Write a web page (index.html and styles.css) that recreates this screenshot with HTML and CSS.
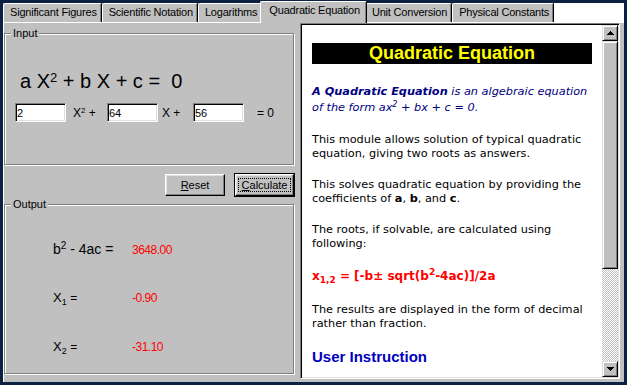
FILE: index.html
```html
<!DOCTYPE html>
<html>
<head>
  <meta charset="utf-8">
  <title>Quadratic Equation</title>
  <link rel="stylesheet" href="styles.css">
</head>
<body>
  <div class="window">
    <div class="tabs">
      <div class="tab">Significant Figures</div>
      <div class="tab">Scientific Notation</div>
      <div class="tab">Logarithms</div>
      <div class="tab active">Quadratic Equation</div>
      <div class="tab">Unit Conversion</div>
      <div class="tab">Physical Constants</div>
      <div class="tabs-fill"></div>
    </div>
    <div class="page">
      <div class="left">
        <div class="group input-group">
          <div class="group-title">Input</div>
          <div class="equation">a X<sup>2</sup> + b X + c = &nbsp;0</div>
          <div class="coeffs">
            <input class="field" type="text" value="2">
            <span class="term term-x2">X<sup>2</sup> +</span>
            <input class="field" type="text" value="64">
            <span class="term term-x">X +</span>
            <input class="field" type="text" value="56">
            <span class="term term-eq">= 0</span>
          </div>
        </div>
        <div class="actions">
          <button class="btn"><u>R</u>eset</button>
          <button class="btn default"><span class="focus"><u>C</u>alculate</span></button>
        </div>
        <div class="group output-group">
          <div class="group-title">Output</div>
          <div class="results">
            <div class="result">
              <span class="label">b<sup>2</sup> - 4ac =</span>
              <span class="value">3648.00</span>
            </div>
            <div class="result">
              <span class="label root">X<sub>1</sub> <span class="eq">=</span></span>
              <span class="value">-0.90</span>
            </div>
            <div class="result">
              <span class="label root">X<sub>2</sub> <span class="eq">=</span></span>
              <span class="value">-31.10</span>
            </div>
          </div>
        </div>
      </div>
      <div class="browser">
        <div class="doc">
          <div class="doc-title">Quadratic Equation</div>
          <p class="intro"><b>A Quadratic Equation</b> is an algebraic equation of the form ax<sup>2</sup> + bx + c = 0.</p>
          <p>This module allows solution of typical quadratic equation, giving two roots as answers.</p>
          <p>This solves quadratic equation by providing the coefficients of <b>a</b>, <b>b</b>, and <b>c</b>.</p>
          <p>The roots, if solvable, are calculated using following:</p>
          <p class="formula">x<sub>1,2</sub> = [-b± sqrt(b<sup>2</sup>-4ac)]/2a</p>
          <p>The results are displayed in the form of decimal rather than fraction.</p>
          <h2 class="doc-heading">User Instruction</h2>
        </div>
        <div class="scrollbar">
          <div class="sb-btn">
            <svg width="7" height="4" viewBox="0 0 7 4" shape-rendering="crispEdges"><polygon points="3.5,0 7,4 0,4" fill="#000"/></svg>
          </div>
          <div class="sb-thumb"></div>
          <div class="sb-track"></div>
          <div class="sb-btn">
            <svg width="7" height="4" viewBox="0 0 7 4" shape-rendering="crispEdges"><polygon points="0,0 7,0 3.5,4" fill="#000"/></svg>
          </div>
        </div>
      </div>
    </div>
  </div>
</body>
</html>
```
FILE: styles.css
```css
body {
  margin: 0;
  background-color: #0b2142;
  font-family: "Liberation Sans", Arial, sans-serif;
  font-size: 11px;
  color: #000;
}

sup,
sub {
  line-height: 0;
}

.window {
  margin: 1px 3px 3px;
  width: 621px;
  height: 381px;
  display: flex;
  flex-direction: column;
}

/* tab strip */
.tabs {
  display: flex;
  align-items: flex-end;
  height: 21px;
  flex: none;
}

.tab {
  box-sizing: border-box;
  height: 19px;
  padding: 0 4px 0 6px;
  line-height: 17px;
  letter-spacing: -0.2px;
  white-space: nowrap;
  background-color: #c0c0c0;
  border: 1px solid #fff;
  border-bottom: 0;
  border-right-color: #000;
  border-radius: 2px 2px 0 0;
  box-shadow: inset -1px 0 #808080;
}

.tab.active {
  position: relative;
  z-index: 1;
  height: 22px;
  margin: 0 -2px -1px;
  padding: 0 6px 0 8px;
}

.tabs-fill {
  flex: 1;
  height: 19px;
  background-color: #fff;
}

.page {
  flex: 1;
  display: flex;
  align-items: flex-start;
  gap: 6px;
  padding-right: 4px;
  background-color: #c0c0c0;
  border-top: 1px solid #fff;
  border-left: 1px solid #fff;
}

/* left side */
.left {
  width: 290px;
  flex: none;
  display: flex;
  flex-direction: column;
}

.group {
  box-sizing: border-box;
  display: flex;
  flex-direction: column;
  align-items: flex-start;
  border: 1px solid #808080;
  box-shadow: 1px 1px #fff, inset 1px 1px #fff;
}

.group-title {
  margin: -7px 0 0 6px;
  padding: 0 2px;
  line-height: 13px;
  background-color: #c0c0c0;
}

.input-group {
  margin-top: 10px;
  height: 132px;
}

.equation {
  margin: 29px 0 0 15px;
  font-size: 20px;
  line-height: 24px;
  white-space: pre;
}

.equation sup {
  font-size: 13px;
  vertical-align: 6px;
}

.coeffs {
  display: flex;
  align-items: center;
  margin: 10px 0 0 10px;
}

.field {
  box-sizing: border-box;
  width: 51px;
  height: 19px;
  margin: 0;
  padding: 0 1px;
  font-family: "Liberation Sans", Arial, sans-serif;
  font-size: 11px;
  background-color: #fff;
  border: 1px solid;
  border-color: #808080 #fff #fff #808080;
  box-shadow: inset 1px 1px #000, inset -1px -1px #dfdfdf;
  outline: none;
}

.term {
  font-size: 12px;
  white-space: nowrap;
}

.term sup {
  font-size: 8px;
  vertical-align: 4px;
}

.term-x2 {
  width: 34px;
  margin-left: 7px;
}

.term-x {
  width: 31px;
  margin-left: 4px;
}

.term-eq {
  margin-left: 13px;
}

.actions {
  display: flex;
  justify-content: flex-end;
  gap: 10px;
  margin-top: 9px;
}

.btn {
  box-sizing: border-box;
  width: 60px;
  height: 22px;
  padding: 0;
  font-family: "Liberation Sans", Arial, sans-serif;
  font-size: 11px;
  color: #000;
  background-color: #c0c0c0;
  border: 1px solid;
  border-color: #fff #000 #000 #fff;
  box-shadow: inset -1px -1px #808080, inset 1px 1px #dfdfdf;
}

.btn.default {
  width: 59px;
  outline: 1px solid #000;
}

.btn .focus {
  display: block;
  margin: 2px;
  border: 1px dotted #000;
  line-height: 12px;
}

.output-group {
  margin-top: 8px;
  height: 170px;
}

.results {
  margin-top: 30px;
  padding-left: 48px;
}

.result {
  display: flex;
  align-items: baseline;
  height: 49px;
  line-height: 16px;
}

.label {
  width: 79px;
  font-size: 14px;
}

.label sup {
  font-size: 10px;
  vertical-align: 5px;
}

.label.root {
  font-size: 13px;
}

.label sub {
  font-size: 9px;
  vertical-align: -3px;
}

.label .eq {
  font-size: 12px;
}

.value {
  font-size: 12px;
  letter-spacing: -0.5px;
  color: #f00;
}

/* help browser */
.browser {
  box-sizing: border-box;
  width: 320px;
  height: 356px;
  flex: none;
  display: flex;
  padding: 1px;
  border: 1px solid;
  border-color: #808080 #fff #fff #808080;
  box-shadow: inset 1px 1px #000, inset -1px -1px #dfdfdf;
}

.doc {
  flex: 1;
  padding: 18px 10px 0;
  overflow: hidden;
  background-color: #fff;
  font-family: "DejaVu Sans", Verdana, sans-serif;
  font-size: 11.3px;
  line-height: 13.5px;
}

.doc-title {
  margin-bottom: 20px;
  height: 21px;
  line-height: 21px;
  text-align: center;
  font-family: "Liberation Sans", Arial, sans-serif;
  font-size: 18px;
  font-weight: bold;
  color: #ff0;
  background-color: #000;
}

.doc p {
  margin: 0 0 18px;
}

.doc .intro {
  color: #000080;
  font-style: italic;
  line-height: 15.7px;
}

.doc sup {
  font-size: 8px;
  vertical-align: 4px;
}

.doc .formula {
  color: #f00;
  font-weight: bold;
  font-size: 12px;
  line-height: 17px;
}

.formula sub {
  font-size: 9px;
  vertical-align: -3px;
}

.formula sup {
  font-size: 9px;
  vertical-align: 5px;
}

.doc-heading {
  margin: 0;
  font-family: "Liberation Sans", Arial, sans-serif;
  font-size: 15px;
  line-height: 18px;
  color: #0000c0;
}

.scrollbar {
  width: 16px;
  flex: none;
  display: flex;
  flex-direction: column;
  background-image: repeating-conic-gradient(#fff 0 25%, #c0c0c0 0 50%);
  background-size: 2px 2px;
}

.sb-btn,
.sb-thumb {
  box-sizing: border-box;
  background-color: #c0c0c0;
  border: 1px solid;
  border-color: #dfdfdf #000 #000 #dfdfdf;
  box-shadow: inset 1px 1px #fff, inset -1px -1px #808080;
}

.sb-btn {
  height: 16px;
  display: flex;
  align-items: center;
  justify-content: center;
}

.sb-btn svg {
  display: block;
}

.sb-thumb {
  height: 228px;
}

.sb-track {
  flex: 1;
}
```
